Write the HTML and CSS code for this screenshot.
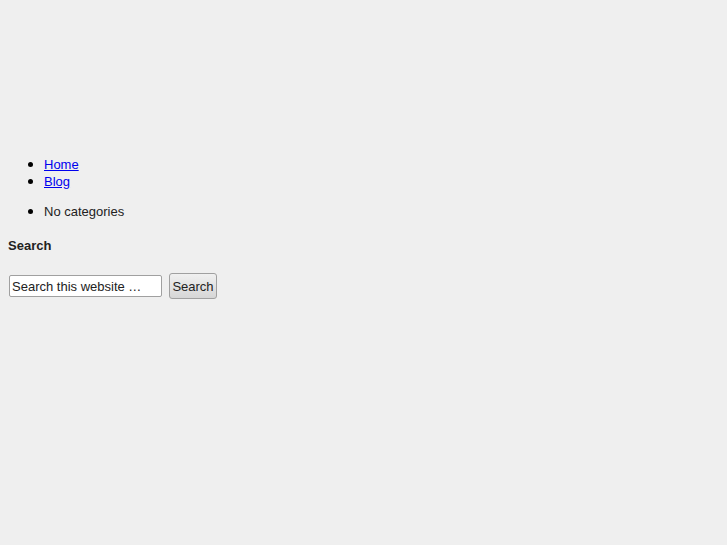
FILE: index.html
```html
<!DOCTYPE html>
<html>
	<head>
		<meta charset="utf-8" />
		<link rel="stylesheet" href="styles.css">
	</head>
	<body>
		<div class="header"></div>
		<ul class="menu">
			<li><a href="#">Home</a></li>
			<li><a href="#">Blog</a></li>
		</ul>
		<ul class="cats">
			<li>No categories</li>
		</ul>
		<h4 class="widget-title">Search</h4>
		<form class="search-form">
			<input class="search-input" type="text" placeholder="Search this website …" />
			<button class="search-button" type="button">Search</button>
		</form>
	</body>
</html>
```
FILE: styles.css
```css
html {
	background: rgb(239, 239, 239);
}
body {
	margin: 8px;
	font-family: 'Liberation Sans', Arial, sans-serif;
	font-size: 13px;
	line-height: 17px;
	color: rgb(34, 34, 34);
}
div.header {
	height: 147px;
}
ul {
	margin: 0;
	padding-left: 36px;
}
li {
	height: 17px;
}
li::marker {
	font-size: 16px;
	color: black;
}
ul.menu {
	margin-bottom: 13px;
}
a {
	color: rgb(0, 0, 238);
}
.widget-title {
	font-size: 13px;
	font-weight: bold;
	margin: 18px 0 19px;
}
.search-form {
	display: flex;
	align-items: center;
	gap: 7px;
	padding-left: 1px;
}
.search-input {
	width: 153px;
	height: 22px;
	box-sizing: border-box;
	font-family: 'Liberation Sans', Arial, sans-serif;
	font-size: 13px;
	color: rgb(34, 34, 34);
	border: 1px solid rgb(160, 160, 160);
	border-radius: 2px;
	padding: 1px 2px;
	background: white;
}
.search-input::placeholder {
	color: rgb(34, 34, 34);
}
.search-button {
	height: 26px;
	width: 48px;
	font-family: 'Liberation Sans', Arial, sans-serif;
	font-size: 13px;
	color: rgb(34, 34, 34);
	padding: 0;
	border: 1px solid rgb(160, 160, 160);
	border-radius: 3px;
	background: linear-gradient(rgb(240, 240, 240), rgb(214, 214, 214));
}
```
